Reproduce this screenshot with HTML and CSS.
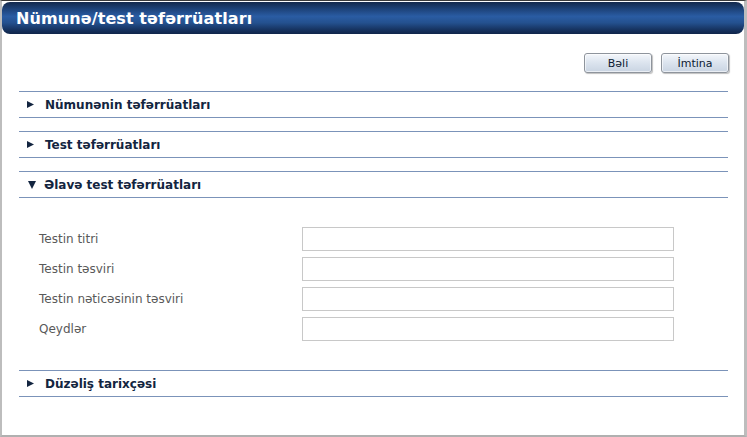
FILE: index.html
```html
<!DOCTYPE html>
<html>
<head>
<meta charset="utf-8">
<link rel="stylesheet" href="styles.css">
</head>
<body>
<div class="window">
  <div class="titlebar"><span class="title">Nümunə/test təfərrüatları</span></div>
  <div class="content">
    <div class="actions">
      <button class="btn">Bəli</button>
      <button class="btn">İmtina</button>
    </div>
    <div class="section">
      <div class="sec-head"><svg class="arrow" width="7" height="7" viewBox="0 0 7 7"><polygon points="0,0 7,3.5 0,7" fill="#132540"/></svg>Nümunənin təfərrüatları</div>
    </div>
    <div class="section">
      <div class="sec-head"><svg class="arrow" width="7" height="7" viewBox="0 0 7 7"><polygon points="0,0 7,3.5 0,7" fill="#132540"/></svg>Test təfərrüatları</div>
    </div>
    <div class="section">
      <div class="sec-head"><svg class="arrow down" width="8" height="8" viewBox="0 0 8 8"><polygon points="0,0 8,0 4,8" fill="#132540"/></svg>Əlavə test təfərrüatları</div>
      <div class="sec-body">
        <div class="row"><label class="lbl">Testin titri</label><input class="inp" type="text"></div>
        <div class="row"><label class="lbl">Testin təsviri</label><input class="inp" type="text"></div>
        <div class="row"><label class="lbl">Testin nəticəsinin təsviri</label><input class="inp" type="text"></div>
        <div class="row"><label class="lbl">Qeydlər</label><input class="inp" type="text"></div>
      </div>
    </div>
    <div class="section">
      <div class="sec-head"><svg class="arrow" width="7" height="7" viewBox="0 0 7 7"><polygon points="0,0 7,3.5 0,7" fill="#132540"/></svg>Düzəliş tarixçəsi</div>
    </div>
  </div>
</div>
</body>
</html>
```
FILE: styles.css
```css
html, body {
  margin: 0;
  padding: 0;
  background: #ffffff;
}
body {
  font-family: "DejaVu Sans", "Liberation Sans", sans-serif;
}
.window {
  box-sizing: border-box;
  width: 747px;
  height: 437px;
  border-left: 2px solid #bdbdbd;
  border-right: 3px solid #bdbdbd;
  border-bottom: 2px solid #b0b0b0;
  border-top: 1px solid #3c3c3c;
  background: #fff;
}
.titlebar {
  margin-top: 1px;
  height: 32px;
  border-radius: 8px;
  background: linear-gradient(to bottom, #14294c 0%, #1f467f 25%, #2a5ca3 45%, #24518f 65%, #173563 85%, #10254a 100%);
  display: flex;
  align-items: center;
  padding-left: 14px;
}
.title {
  color: #ffffff;
  font-weight: bold;
  font-size: 16px;
  letter-spacing: 0.1px;
}
.content {
  padding: 0 16px 0 17px;
}
.actions {
  display: flex;
  justify-content: flex-end;
  gap: 9px;
  padding-top: 19px;
  margin-right: -1px;
}
.btn {
  width: 68px;
  height: 20px;
  padding: 0;
  border: 1px solid #8e949c;
  border-radius: 3px;
  background: linear-gradient(to bottom, #f4f7fb 0%, #dde5ef 45%, #c9d4e2 100%);
  box-shadow: 1px 1px 1px rgba(0,0,0,0.25), inset 0 0 0 1px rgba(255,255,255,0.6);
  font-family: "DejaVu Sans", "Liberation Sans", sans-serif;
  font-size: 11px;
  color: #0d1a33;
}
.section {
  margin-top: 13px;
}
.actions + .section {
  margin-top: 18px;
}
.sec-head {
  box-sizing: border-box;
  height: 27px;
  border-top: 1px solid #7b93b9;
  border-bottom: 1px solid #7b93b9;
  display: flex;
  align-items: center;
  padding-left: 8px;
  font-weight: bold;
  font-size: 12px;
  color: #132540;
}
.arrow {
  flex: none;
  margin-right: 11px;
}
.arrow.down {
  margin-left: 1px;
  margin-right: 8px;
}
.sec-body {
  padding: 29px 0 16px 20px;
  display: flex;
  flex-direction: column;
  gap: 6px;
}
.row {
  display: flex;
  align-items: center;
  height: 24px;
}
.lbl {
  width: 263px;
  font-size: 12px;
  color: #595959;
}
.inp {
  box-sizing: border-box;
  width: 372px;
  height: 24px;
  margin: 0;
  border: 1px solid #c8c8c8;
  background: #fff;
}
```
